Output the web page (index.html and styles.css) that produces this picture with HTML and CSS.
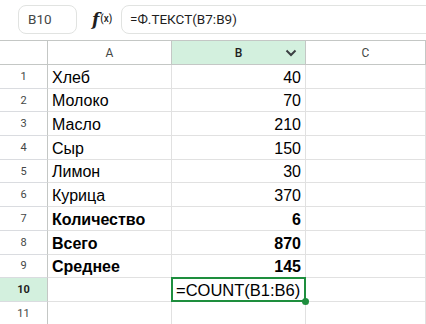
FILE: index.html
```html
<!DOCTYPE html>
<html>
<head>
    <title>Sheet</title>
    <link rel="stylesheet" href="styles.css">
</head>
<body>
    <div class="toolbar">
        <div class="name-box">B10</div>
        <div class="fx">f<span class="fx-x">(x)</span></div>
        <div class="formula">=Ф.ТЕКСТ(B7:B9)</div>
    </div>

    <div class="sheet">
        <div class="corner"></div>
        <div class="col-head">A</div>
        <div class="col-head active">B
            <svg class="chevron" width="12" height="8" viewBox="0 0 12 8"><path d="M1.5 1.5 L6 6 L10.5 1.5" fill="none" stroke="#3c4043" stroke-width="2"/></svg>
        </div>
        <div class="col-head">C</div>

        <div class="row-head">1</div><div class="cell">Хлеб</div><div class="cell num">40</div><div class="cell"></div>
        <div class="row-head">2</div><div class="cell">Молоко</div><div class="cell num">70</div><div class="cell"></div>
        <div class="row-head">3</div><div class="cell">Масло</div><div class="cell num">210</div><div class="cell"></div>
        <div class="row-head">4</div><div class="cell">Сыр</div><div class="cell num">150</div><div class="cell"></div>
        <div class="row-head">5</div><div class="cell">Лимон</div><div class="cell num">30</div><div class="cell"></div>
        <div class="row-head">6</div><div class="cell">Курица</div><div class="cell num">370</div><div class="cell"></div>
        <div class="row-head">7</div><div class="cell bold">Количество</div><div class="cell num bold">6</div><div class="cell"></div>
        <div class="row-head">8</div><div class="cell bold">Всего</div><div class="cell num bold">870</div><div class="cell"></div>
        <div class="row-head">9</div><div class="cell bold">Среднее</div><div class="cell num bold">145</div><div class="cell"></div>
        <div class="row-head active">10</div><div class="cell"></div><div class="cell selected">=COUNT(B1:B6)</div><div class="cell"></div>
        <div class="row-head">11</div><div class="cell"></div><div class="cell"></div><div class="cell"></div>
    </div>
</body>
</html>
```

FILE: styles.css
```css
body {
    margin: 0;
    width: 426px;
    height: 324px;
    overflow: hidden;
    background: #fff;
    font-family: Roboto, "Liberation Sans", sans-serif;
}

/* formula bar */
.toolbar {
    display: flex;
    align-items: center;
    height: 40px;
    padding: 0 0 0 18px;
    box-sizing: border-box;
}
.name-box {
    width: 59px;
    height: 29px;
    box-sizing: border-box;
    margin-top: -1px;
    border: 1px solid #e1e3e1;
    border-radius: 8px;
    padding-left: 9px;
    line-height: 27px;
    font-size: 13.5px;
    color: #444746;
}
.fx {
    width: 29px;
    margin-left: 15px;
    font-family: "DejaVu Serif", serif;
    font-style: italic;
    font-weight: bold;
    font-size: 17px;
    color: #1f1f1f;
    margin-top: -3px;
}
.fx-x {
    font-family: Roboto, sans-serif;
    font-style: normal;
    font-weight: 500;
    font-size: 10px;
    vertical-align: 3px;
    margin-left: 1px;
}
.formula {
    flex: 1;
    height: 29px;
    margin-top: -1px;
    margin-right: -20px;
    box-sizing: border-box;
    border: 1px solid #e1e3e1;
    border-radius: 8px 0 0 8px;
    padding-left: 8px;
    line-height: 27px;
    font-size: 13.5px;
    color: #1f1f1f;
}

/* grid */
.sheet {
    display: grid;
    grid-template-columns: 48px 124px 134px 120px;
    grid-template-rows: 24px repeat(11, 23.7px);
    border-top: 1px solid #c4c7c5;
    font-family: "Liberation Sans", Arial, sans-serif;
}
.corner, .col-head, .row-head {
    box-sizing: border-box;
    border-right: 1px solid #c4c7c5;
    border-bottom: 1px solid #c4c7c5;
    color: #444746;
    font-family: Roboto, sans-serif;
    font-size: 11px;
    display: flex;
    align-items: center;
    justify-content: center;
}
.col-head {
    position: relative;
    font-size: 12px;
}
.col-head.active {
    background: #d3f0de;
    color: #1f1f1f;
    font-weight: 500;
}
.chevron {
    position: absolute;
    right: 8px;
    top: 8px;
}
.row-head {
    border-bottom-color: #dadce0;
}
.row-head.active {
    background: #d3f0de;
    font-weight: bold;
    color: #1f1f1f;
}
.cell {
    box-sizing: border-box;
    border-right: 1px solid #e1e1e1;
    border-bottom: 1px solid #e1e1e1;
    display: flex;
    align-items: flex-end;
    padding: 0 4px 1px 4px;
    font-size: 16px;
    line-height: 19px;
    color: #000;
    white-space: nowrap;
}
.num {
    justify-content: flex-end;
}
.bold {
    font-weight: bold;
}
.selected {
    position: relative;
    font-size: 16.5px;
}
.selected::before {
    content: "";
    position: absolute;
    left: -1px;
    top: -1px;
    right: -1px;
    bottom: -1px;
    border: 2px solid #1e8e3e;
}
.selected::after {
    content: "";
    position: absolute;
    right: -4px;
    bottom: -4px;
    width: 7px;
    height: 7px;
    border-radius: 50%;
    background: #1e8e3e;
}
```
